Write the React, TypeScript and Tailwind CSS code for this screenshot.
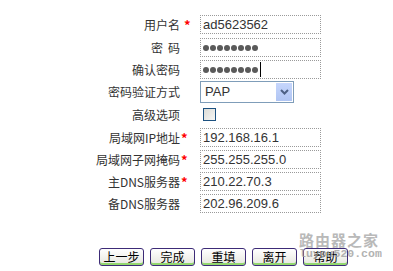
import React from 'react'

interface Row {
  label: React.ReactNode
  star?: boolean
  starGap?: boolean
  kind: 'text' | 'pwd' | 'select' | 'checkbox'
  value?: string
  cursor?: boolean
  h: string
}

const rows: Row[] = [
  { label: '用户名', star: true, starGap: true, kind: 'text', value: 'ad5623562', h: 'h-[23px]' },
  {
    label: (
      <>
        密<span className="inline-block w-[5px]" />码
      </>
    ),
    kind: 'pwd',
    h: 'h-[22px]',
  },
  { label: '确认密码', kind: 'pwd', cursor: true, h: 'h-[21px]' },
  { label: '密码验证方式', kind: 'select', h: 'h-[27px]' },
  { label: '高级选项', kind: 'checkbox', h: 'h-[20px]' },
  { label: '局域网IP地址', star: true, kind: 'text', value: '192.168.16.1', h: 'h-[22px]' },
  { label: '局域网子网掩码', star: true, kind: 'text', value: '255.255.255.0', h: 'h-[22px]' },
  { label: '主DNS服务器', star: true, kind: 'text', value: '210.22.70.3', h: 'h-[22px]' },
  { label: '备DNS服务器', kind: 'text', value: '202.96.209.6', h: 'h-[22px]' },
]

const buttons = ['上一步', '完成', '重填', '离开', '帮助']

function Control({ row }: { row: Row }) {
  if (row.kind === 'select') {
    return (
      <div className="flex h-[22px] w-[94px] items-center border border-[#7f9db9] bg-white">
        <span className="flex-1 pl-[4px] font-['Liberation_Sans',Arial,sans-serif] text-[13px] text-[#333]">PAP</span>
        <div className="mr-[1px] flex h-[18px] w-[16px] items-center justify-center bg-gradient-to-b from-[#c6d6fc] to-[#b0c5f3]">
          <svg width="9" height="6" viewBox="0 0 9 6">
            <path d="M1 1 L4.5 4.5 L8 1" fill="none" stroke="#4d6185" strokeWidth="2" />
          </svg>
        </div>
      </div>
    )
  }
  if (row.kind === 'checkbox') {
    return (
      <div className="ml-[3px] h-[13px] w-[13px] border border-[#1c5180] bg-gradient-to-br from-[#dcdcd7] to-[#f6f6f4]" />
    )
  }
  return (
    <div className="flex h-[19px] w-[121px] items-center border border-dotted border-[#9a9a9a] bg-white pl-[2px]">
      {row.kind === 'text' ? (
        <span className="font-['Liberation_Sans',Arial,sans-serif] text-[13px] leading-none text-[#333]">{row.value}</span>
      ) : (
        <div className="flex items-center gap-[1px]">
          {Array.from({ length: 8 }).map((_, i) => (
            <span key={i} className="h-[6px] w-[6px] rounded-full bg-[#5a5a5a]" />
          ))}
          {row.cursor && <span className="ml-[1px] h-[15px] w-[1px] bg-black" />}
        </div>
      )}
    </div>
  )
}

export default function App() {
  return (
    <div className="relative h-[271px] w-[393px] overflow-hidden bg-white font-['Noto_Sans_CJK_SC',sans-serif]">
      <div className="flex flex-col pt-[15px]">
        {rows.map((row, i) => (
          <div key={i} className={`flex items-start ${row.h}`}>
            <div
              className={`flex w-[180px] items-center justify-end text-[12px] text-[#333] ${
                row.kind === 'select' ? 'h-[22px]' : row.kind === 'checkbox' ? 'h-[13px]' : 'h-[19px]'
              }`}
            >
              {row.label}
            </div>
            <div
              className={`w-[20px] text-[13px] font-bold leading-[19px] text-[#ff0000] ${
                row.starGap ? 'pl-[4px]' : 'pl-[1px]'
              }`}
            >
              {row.star ? '*' : ''}
            </div>
            <Control row={row} />
          </div>
        ))}
      </div>

      {/* Buttons */}
      <div className="mt-[32px] flex gap-[6px] pl-[99px]">
        {buttons.map((b) => (
          <button
            key={b}
            className="flex h-[18px] w-[45px] items-center justify-center rounded-[3px] border border-[#3d2b77] bg-gradient-to-b from-white to-[#e6e6de] text-[12px] leading-none text-black shadow-[inset_0_-2px_0_#93d86f]"
          >
            {b}
          </button>
        ))}
      </div>

      {/* Watermark */}
      <div className="pointer-events-none absolute left-[299px] top-[232px] flex flex-col items-start opacity-80">
        <span className="text-[15px] font-bold leading-[16px] tracking-[1px] text-[#a8a8a8]">路由器之家</span>
        <span className="mt-[-1px] font-['Liberation_Mono',monospace] text-[11.5px] font-bold leading-[14px] text-[#a0a0a0]">
          luyou520.com
        </span>
      </div>
    </div>
  )
}
